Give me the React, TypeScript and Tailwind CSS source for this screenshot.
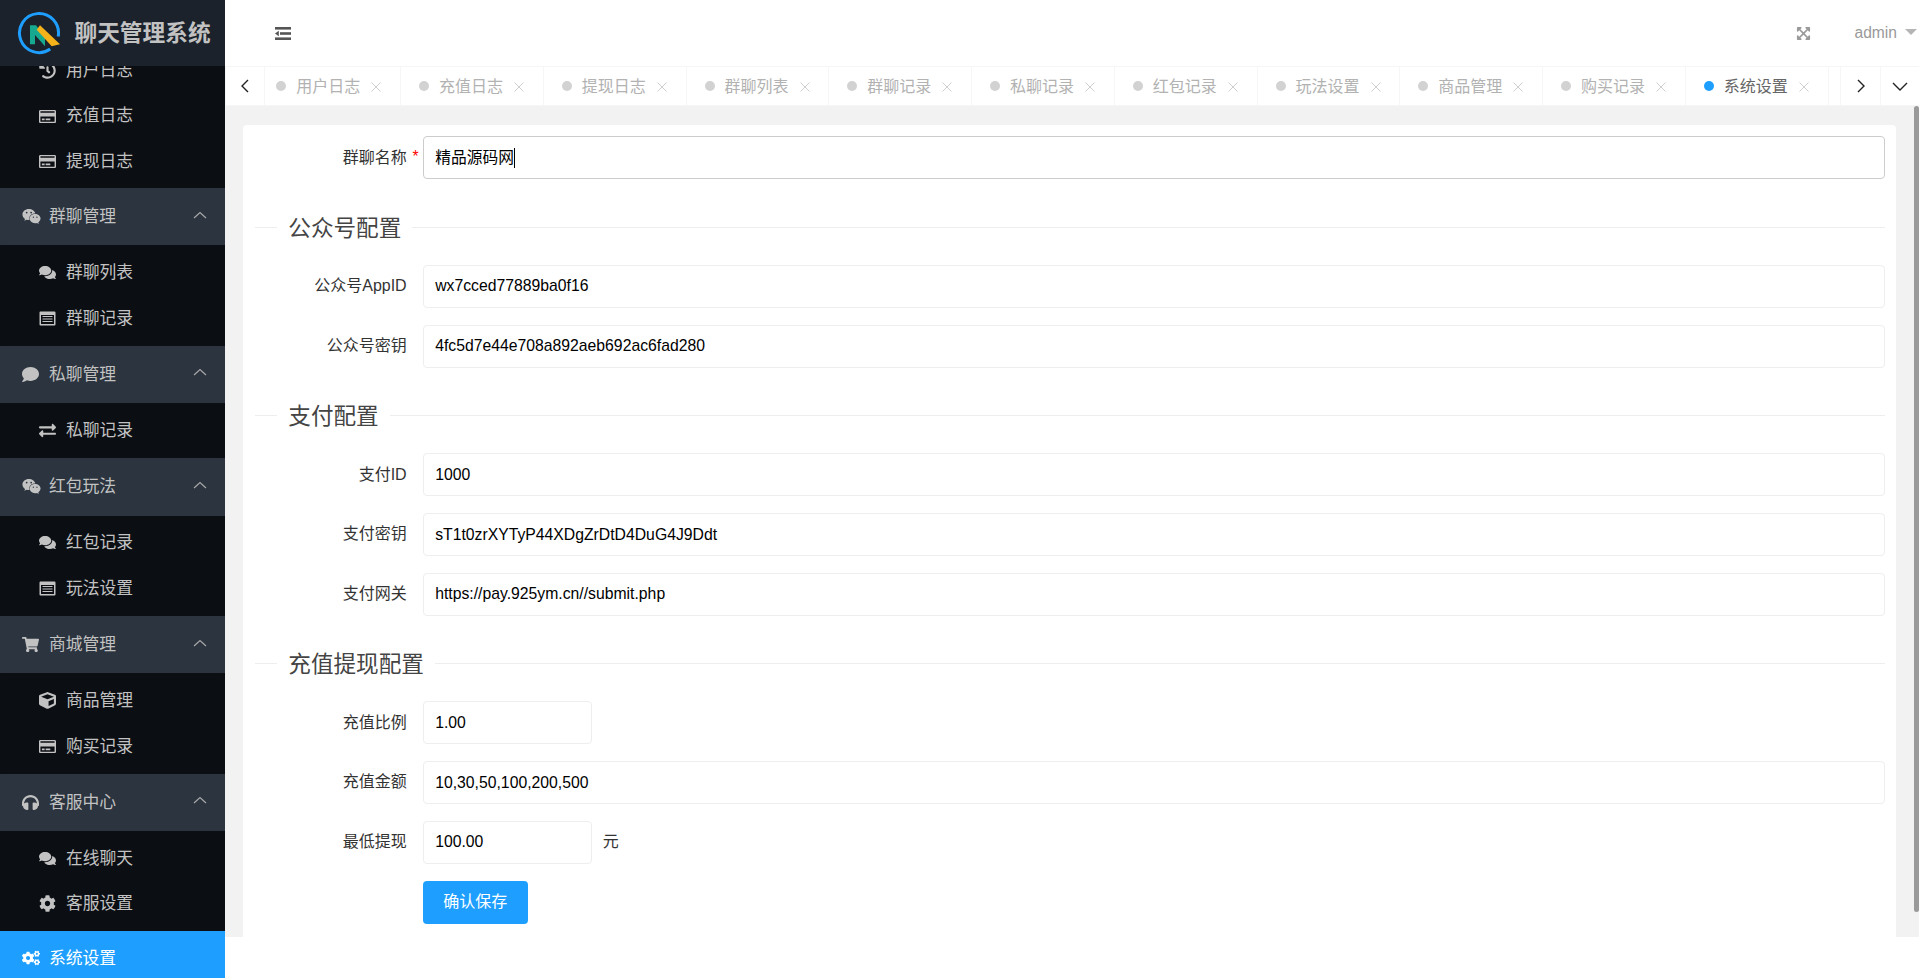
import {
  FaCog,
  FaCogs,
  FaComment,
  FaComments,
  FaCube,
  FaExchangeAlt,
  FaExpandArrowsAlt,
  FaHeadphones,
  FaHistory,
  FaRegCreditCard,
  FaShoppingCart,
  FaWeixin,
} from 'react-icons/fa';
import { ReactNode } from 'react';

const font = "font-['Liberation_Sans','Noto_Sans_CJK_SC',sans-serif]";

const tabs = ['用户日志', '充值日志', '提现日志', '群聊列表', '群聊记录', '私聊记录', '红包记录', '玩法设置', '商品管理', '购买记录', '系统设置'];

function Logo() {
  return (
    <svg width="44" height="44" viewBox="0 0 44 44" className="shrink-0">
      <path d="M33.2 38 A19.5 19.5 0 1 1 41.2 25.4" fill="none" stroke="#1e9fff" strokeWidth="3" />
      <path d="M13 14.3 L19 14.3 L28 26 V35.3 L18 24 V33.3 H13 Z" fill="#16a98f" />
      <path d="M19.7 18.7 L23 14.3 L43 33.3 L34.7 35.3 Z" fill="#f5b21a" />
    </svg>
  );
}

function ListAltIcon() {
  return (
    <svg width="17" height="15" viewBox="0 0 17 15">
      <path d="M1.5 0.5 H15.5 A1 1 0 0 1 16.5 1.5 V13.5 A1 1 0 0 1 15.5 14.5 H1.5 A1 1 0 0 1 0.5 13.5 V1.5 A1 1 0 0 1 1.5 0.5 Z M2 4 V13 H15 V4 Z" fill="#c2c2c2" fillRule="evenodd" />
      <path d="M3.5 5.5 H13.5 M3.5 8 H13.5 M3.5 10.5 H13.5" stroke="#c2c2c2" strokeWidth="1.2" />
    </svg>
  );
}

function GroupHeader({ icon, label }: { icon: ReactNode; label: string }) {
  return (
    <div className="flex h-[57.4px] items-center bg-[#2b343f] pl-[22px] pr-[18px] text-[16.8px] text-[#c2c2c2]">
      <span className="flex w-[27px] text-[17px]">{icon}</span>
      <span>{label}</span>
      <svg width="14" height="8" viewBox="0 0 14 8" className="mb-1 ml-auto">
        <path d="M1 7 L7 1.5 L13 7" fill="none" stroke="#a8a8a8" strokeWidth="1.2" />
      </svg>
    </div>
  );
}

function Child({ icon, label }: { icon: ReactNode; label: string }) {
  return (
    <div className="flex h-[45.4px] items-center pl-[39px] text-[16.8px] text-[#c2c2c2]">
      <span className="flex w-[27px] text-[17px]">{icon}</span>
      <span>{label}</span>
    </div>
  );
}

function Group({ icon, label, children }: { icon: ReactNode; label: string; children: ReactNode }) {
  return (
    <div>
      <GroupHeader icon={icon} label={label} />
      <div className="rounded-sm bg-[#0b0e13] py-[4.8px]">{children}</div>
    </div>
  );
}

function Sidebar() {
  return (
    <aside className="flex h-[978px] w-[225px] shrink-0 flex-col overflow-hidden bg-[#0b0e13]">
      <div className="relative z-10 flex h-[66px] shrink-0 items-center gap-[13.5px] bg-[#1b222b] pl-[17px]">
        <Logo />
        <span className="text-[22.7px] font-bold whitespace-nowrap text-[#c2c2c2]">聊天管理系统</span>
      </div>
      <div className="-mt-[18px]">
        <div className="pb-[3.8px]">
          <Child icon={<FaHistory />} label="用户日志" />
          <Child icon={<FaRegCreditCard />} label="充值日志" />
          <Child icon={<FaRegCreditCard />} label="提现日志" />
        </div>
        <Group icon={<FaWeixin className="text-[19px]" />} label="群聊管理">
          <Child icon={<FaComments />} label="群聊列表" />
          <Child icon={<ListAltIcon />} label="群聊记录" />
        </Group>
        <Group icon={<FaComment />} label="私聊管理">
          <Child icon={<FaExchangeAlt />} label="私聊记录" />
        </Group>
        <Group icon={<FaWeixin className="text-[19px]" />} label="红包玩法">
          <Child icon={<FaComments />} label="红包记录" />
          <Child icon={<ListAltIcon />} label="玩法设置" />
        </Group>
        <Group icon={<FaShoppingCart />} label="商城管理">
          <Child icon={<FaCube />} label="商品管理" />
          <Child icon={<FaRegCreditCard />} label="购买记录" />
        </Group>
        <Group icon={<FaHeadphones />} label="客服中心">
          <Child icon={<FaComments />} label="在线聊天" />
          <Child icon={<FaCog />} label="客服设置" />
        </Group>
        <div className="flex h-[60px] items-start bg-[#1e9fff] pl-[22px] pt-[18px] text-[16.8px] leading-[20px] text-white">
          <span className="flex w-[27px] text-[18px]">
            <FaCogs />
          </span>
          <span>系统设置</span>
        </div>
      </div>
    </aside>
  );
}

function Header() {
  return (
    <header className="flex h-[66px] items-center bg-white pl-[50px] pr-[2px]">
      <svg width="16" height="13" viewBox="0 0 16 13">
        <rect x="0" y="0" width="16" height="2.6" fill="#555" />
        <rect x="5" y="5.2" width="11" height="2.6" fill="#555" />
        <rect x="0" y="10.4" width="16" height="2.6" fill="#555" />
        <path d="M3.8 3.8 V9.2 L0 6.5 Z" fill="#555" />
      </svg>
      <span className="ml-auto flex text-[15px] text-[#999]">
        <FaExpandArrowsAlt />
      </span>
      <span className="ml-[44px] text-[15.6px] text-[#999]">admin</span>
      <span className="ml-[8px] mb-[2px] h-0 w-0 border-x-[6px] border-t-[6px] border-x-transparent border-t-[#b5b5b5]" />
    </header>
  );
}

function Tabs() {
  return (
    <div className="flex h-10 items-stretch border-y border-[#f6f6f6] bg-white">
      <button className="flex w-10 shrink-0 items-center justify-center border-x border-[#f6f6f6] text-[#222]">
        <svg width="10" height="14" viewBox="0 0 10 14">
          <path d="M8 1 L2 7 L8 13" fill="none" stroke="currentColor" strokeWidth="1.4" />
        </svg>
      </button>
      <div className="min-w-0 flex-1 overflow-hidden">
        <div className="-ml-[6.75px] flex h-full">
          {tabs.map((t, i) => (
            <div key={t} className="flex w-[142.75px] shrink-0 items-center border-r border-[#f6f6f6] pl-[18px] text-[16px]">
              <span className={`h-[10px] w-[10px] rounded-full ${i === tabs.length - 1 ? 'bg-[#1e9fff]' : 'bg-[#d2d2d2]'}`} />
              <span className={`ml-[10px] mt-[1px] ${i === tabs.length - 1 ? 'text-[#666]' : 'text-[#b2b2b2]'}`}>{t}</span>
              <svg width="10" height="10" viewBox="0 0 10 10" className="ml-[11px] mt-[1px]">
                <path d="M0.5 0.5 L9.5 9.5 M9.5 0.5 L0.5 9.5" stroke="#cfcfcf" strokeWidth="1" />
              </svg>
            </div>
          ))}
        </div>
      </div>
      <button className="flex w-10 shrink-0 items-center justify-center border-l border-[#f6f6f6] text-[#222]">
        <svg width="10" height="14" viewBox="0 0 10 14">
          <path d="M2 1 L8 7 L2 13" fill="none" stroke="currentColor" strokeWidth="1.4" />
        </svg>
      </button>
      <button className="flex w-[39px] shrink-0 items-center justify-center border-l border-[#f6f6f6] text-[#222]">
        <svg width="16" height="9" viewBox="0 0 16 9">
          <path d="M1 1 L8 8 L15 1" fill="none" stroke="currentColor" strokeWidth="1.4" />
        </svg>
      </button>
    </div>
  );
}

function Field({
  label,
  value,
  required,
  short,
  suffix,
  focused,
}: {
  label: string;
  value: string;
  required?: boolean;
  short?: boolean;
  suffix?: string;
  focused?: boolean;
}) {
  return (
    <div className="mb-[16.8px] flex items-center">
      <label className="relative w-[167.4px] shrink-0 pr-[16px] text-right text-[16px] leading-[22px] text-[#333]">
        {label}
        {required && <span className="absolute right-[4px] top-[-1px] text-[15.6px] text-[#f00]">*</span>}
      </label>
      <div className={`flex h-[43px] items-center rounded-sm border bg-white pl-[11.5px] text-[15.75px] text-black ${short ? 'w-[169px]' : 'flex-1'} ${focused ? 'border-[#ccc]' : 'border-[#eee]'}`}>
        {value}
        {focused && <span className="h-[20px] w-px bg-black" />}
      </div>
      {suffix && <span className="ml-[11px] text-[16px] text-[#333]">{suffix}</span>}
    </div>
  );
}

function Legend({ title }: { title: string }) {
  return (
    <div className="mb-[6.7px] flex h-[62px] items-center">
      <span className="h-px w-[22px] bg-[#eee]" />
      <span className="px-[11px] pt-[3px] text-[22.6px] leading-[38px] text-[#444]">{title}</span>
      <span className="h-px flex-1 bg-[#eee]" />
    </div>
  );
}

export default function App() {
  return (
    <div className={`flex h-[978px] overflow-hidden bg-white ${font}`}>
      <Sidebar />
      <main className="flex min-w-0 flex-1 flex-col">
        <Header />
        <Tabs />
        <div className="relative h-[831px] bg-[#f2f2f2] pl-[18.3px] pr-[23px] pt-[19px]">
          <div className="h-[812px] overflow-hidden rounded-t bg-white pl-[12px] pr-[11.3px] pt-[11.3px]">
            <Field label="群聊名称" value="精品源码网" required focused />
            <Legend title="公众号配置" />
            <Field label="公众号AppID" value="wx7cced77889ba0f16" />
            <Field label="公众号密钥" value="4fc5d7e44e708a892aeb692ac6fad280" />
            <Legend title="支付配置" />
            <Field label="支付ID" value="1000" />
            <Field label="支付密钥" value="sT1t0zrXYTyP44XDgZrDtD4DuG4J9Ddt" />
            <Field label="支付网关" value="https://pay.925ym.cn//submit.php" />
            <Legend title="充值提现配置" />
            <Field label="充值比例" value="1.00" short />
            <Field label="充值金额" value="10,30,50,100,200,500" />
            <Field label="最低提现" value="100.00" short suffix="元" />
            <div className="pl-[167.4px]">
              <button className="h-[43px] w-[105px] rounded-sm bg-[#1e9fff] text-[16px] text-white">确认保存</button>
            </div>
          </div>
          <div className="absolute right-0 top-0 h-[806px] w-[5px] rounded-full bg-[#9a9a9a]" />
        </div>
      </main>
    </div>
  );
}
